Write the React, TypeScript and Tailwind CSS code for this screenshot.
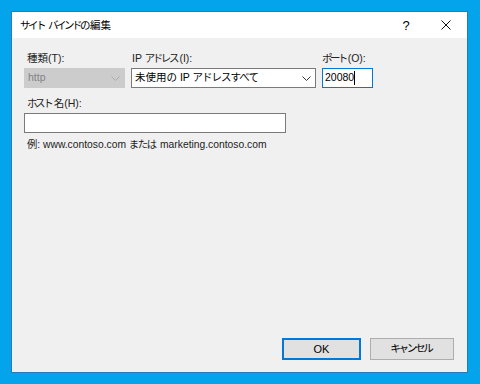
const font = "font-['Liberation_Sans','Noto_Sans_CJK_JP',sans-serif]";

function Chevron({ className }: { className?: string }) {
  return (
    <svg width="9" height="5" viewBox="0 0 9 5" className={className} aria-hidden>
      <path d="M0.5 0.5 L4.5 4.5 L8.5 0.5" fill="none" stroke="currentColor" strokeWidth="1" />
    </svg>
  );
}

// Yu Gothic UI kana run narrower than Noto's full-width ones
function K({ children, t = "tracking-[-2.4px] mr-[2.4px]" }: { children: React.ReactNode; t?: string }) {
  return <span className={t}>{children}</span>;
}

export default function App() {
  return (
    <div className={`relative h-[384px] w-[480px] overflow-hidden bg-[#03a4ec] ${font}`}>
      <div className="absolute left-[11px] top-[11px] flex h-[362px] w-[457px] flex-col border border-[#2a7ab8] bg-[#f0f0f0] text-[10.5px] text-black">
        {/* title bar */}
        <div className="flex h-[26px] items-center bg-white pl-[8px]">
          <span className="flex-1 leading-none">
            <K t="tracking-[-2.5px] mr-[1px]">サイト</K> <K t="tracking-[-2.5px] mr-[2px]">バインドの</K>
            編集
          </span>
          <span className="w-[10px] text-center text-[13px] leading-none">?</span>
          <span className="ml-[30px] mr-[16px] flex w-[10px] justify-center">
            <svg width="10" height="10" viewBox="0 0 10 10" aria-hidden>
              <path d="M0.5 0.5 L9.5 9.5 M9.5 0.5 L0.5 9.5" stroke="#111" strokeWidth="1" />
            </svg>
          </span>
        </div>

        {/* body */}
        <div className="flex flex-1 flex-col pl-[12px] pt-[12px]">
          <div className="flex gap-[6px]">
            <div className="flex w-[101px] flex-col">
              <span className="h-[16px] pl-[3px] leading-[16px] text-[#222]">種類(T):</span>
              <div className="mt-[2px] flex h-[20px] items-center justify-between border border-[#cccccc] bg-[#cccccc] pl-[3px] pr-[4px] text-[#838383]">
                <span>http</span>
                <Chevron className="text-[#aaaaaa]" />
              </div>
            </div>
            <div className="flex w-[185px] flex-col">
              <span className="h-[16px] pl-[1px] leading-[16px] text-[#222]">
                IP <K>アドレス</K>(I):
              </span>
              <div className="mt-[2px] flex h-[20px] items-center justify-between border border-[#7a7a7a] bg-white pl-[3px] pr-[4px]">
                <span>
                  未使用<K t="tracking-[-1px] mr-[1px]">の</K> IP <K t="tracking-[-1px] mr-[1px]">アドレスすべて</K>
                </span>
                <Chevron className="text-[#333]" />
              </div>
            </div>
            <div className="flex w-[51px] flex-col">
              <span className="h-[16px] whitespace-nowrap leading-[16px] text-[#222]">
                <K t="tracking-[-2.6px] mr-[2px]">ポート</K>(O):
              </span>
              <div className="mt-[2px] flex h-[20px] items-center border border-[#0078d7] bg-white pl-[2px]">
                <span>20080</span>
                <span className="h-[14px] w-[1px] bg-black" />
              </div>
            </div>
          </div>

          <span className="mt-[7px] h-[16px] pl-[3px] leading-[16px] text-[#222]">
            <K>ホスト</K>名(H):
          </span>
          <div className="mt-[2px] h-[20px] w-[262px] border border-[#7a7a7a] bg-white" />
          <span className="mt-[4px] pl-[3px] text-[10.3px] leading-[16px] text-[#222]">
            例: www.contoso.com <K t="tracking-[-1.3px] mr-[1.3px]">または</K> marketing.contoso.com
          </span>

          <div className="mt-auto mb-[12px] flex justify-end gap-[9px] pr-[13px]">
            <button className="flex h-[22px] w-[79px] items-center justify-center border-2 border-[#0078d7] bg-[#e1e1e1] text-[11px]">
              OK
            </button>
            <button className="flex h-[22px] w-[84px] items-center justify-center border border-[#adadad] bg-[#e1e1e1] text-[10.5px]">
              <K t="tracking-[-2.2px] mr-[2.2px]">キャンセル</K>
            </button>
          </div>
        </div>
      </div>
    </div>
  );
}
